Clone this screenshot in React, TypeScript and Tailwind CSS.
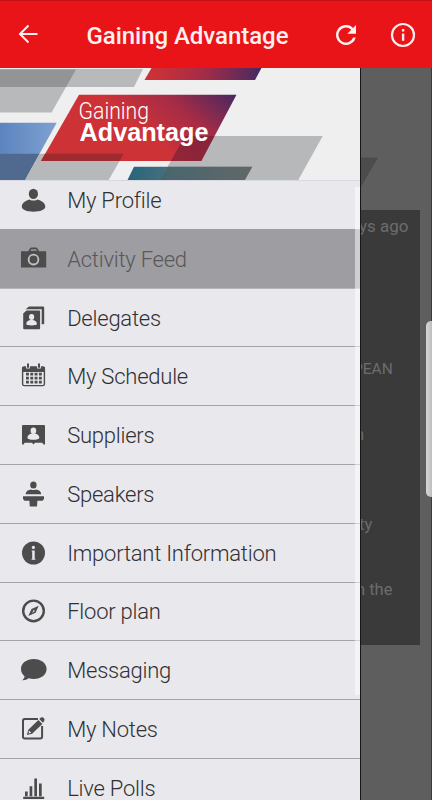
import type { ReactNode } from "react"

const items: { label: string; icon: ReactNode }[] = [
  {
    label: "My Profile",
    icon: (
      <>
        <ellipse cx="13.4" cy="7.9" rx="4.6" ry="5.2" />
        <path d="M9.500 13.400q4 2.400 8 0c4.500 1.300 7.800 3.900 7.800 7.200 0 3.300-5 5.200-11.800 5.200S1.800 23.900 1.800 20.600c0-3.300 3.200-5.900 7.700-7.200z" />
      </>
    ),
  },
  {
    label: "Activity Feed",
    icon: (
      <>
        <path d="M1 6.300h7.200l2-3.200q.4-.7 1.200-.7h4.600q.8 0 1.200.7l2 3.200h7v16.300H1z" />
        <path d="M11.200 4.300h5l.8 1.500h-6.600z" fill="#9c9b9f" />
        <circle cx="13.500" cy="14.600" r="4.900" fill="none" stroke="#c2c1c4" strokeWidth="1.800" />
      </>
    ),
  },
  {
    label: "Delegates",
    icon: (
      <>
        <path d="M5.500 5.200 9 2.500h14q1.200 0 1.200 1.200v15.500q0 1-1 1h-1.500V5.200z" />
        <path d="M6.500 6.400h12.600q1 0 1 1v16.800q0 1-1 1H4.200q-1 0-1-1V9.600z" />
        <ellipse cx="11.600" cy="13" rx="2.600" ry="2.900" fill="#e9e8ed" />
        <path d="M6.300 20.300c0-3 2.500-4.300 5.300-4.300s5.300 1.300 5.300 4.300c0 1.500-10.600 1.500-10.600 0z" fill="#e9e8ed" />
      </>
    ),
  },
  {
    label: "My Schedule",
    icon: (
      <>
        <rect x="2.600" y="5" width="21.800" height="18.600" rx="1.600" fill="none" stroke="#4c4c4d" strokeWidth="1.400" />
        <path d="M2 5h23v5H2z" />
        <path d="M8 2v4.500M19 2v4.500" stroke="#e9e8ed" strokeWidth="3.800" />
        <path d="M8 1.500v4.300M19 1.500v4.300" stroke="#4c4c4d" strokeWidth="2" />
        <path d="M6 12.200h16M6 16.200h16M6 20.200h16" stroke="#4c4c4d" strokeWidth="2.700" strokeDasharray="2.900 1.400" />
      </>
    ),
  },
  {
    label: "Suppliers",
    icon: (
      <>
        <path d="M2 5q0-1 1-1h21q1 0 1 1v18.500h-1.500l-1.200-1.800h-7.300l-1.500 1.800-1.500-1.800H4.700l-1.200 1.800H2z" />
        <ellipse cx="13.400" cy="9.700" rx="2.800" ry="3.200" fill="#e9e8ed" />
        <path d="M7.500 16.800c0-2.800 2.800-4.200 5.900-4.200s5.900 1.400 5.900 4.200c0 2.700-11.800 2.700-11.800 0z" fill="#e9e8ed" />
      </>
    ),
  },
  {
    label: "Speakers",
    icon: (
      <>
        <ellipse cx="13.400" cy="5" rx="3.200" ry="3.600" />
        <path d="M5.700 14.200c0-3 2.800-4.300 5.400-4.700q2.300 1 4.600 0c2.600.4 5.500 1.700 5.500 4.700z" />
        <path d="M3 16.200h21v2.900l-1.500 1.600h-5.100l-.4 5.800h-7.200l-.4-5.800H4.500L3 19.100z" />
      </>
    ),
  },
  {
    label: "Important Information",
    icon: (
      <>
        <circle cx="13.500" cy="14" r="11.500" />
        <circle cx="13.400" cy="8.400" r="1.600" fill="#e9e8ed" />
        <path d="M11.700 11.400h3v8.300h.7v1.100h-3.900v-1.100h.7v-7.200h-.5z" fill="#e9e8ed" />
      </>
    ),
  },
  {
    label: "Floor plan",
    icon: (
      <>
        <circle cx="13.500" cy="13.900" r="10.300" fill="none" stroke="#4c4c4d" strokeWidth="2.400" />
        <path fillRule="evenodd" d="M18.700 8.700 15.600 15.700 8.300 19.100l3.200-7.100zM13.900 12.800l-2 3.100 3-2z" />
      </>
    ),
  },
  {
    label: "Messaging",
    icon: (
      <path d="M13.800 3C6.500 3 1 7.200 1 12.900c0 3 1.300 5.500 3.600 7.300-.3 1.800-1 3-2.600 4 2.700.2 5-.6 6.700-1.900 1.600.4 3.300.6 5.100.6 7.200 0 12.800-4.300 12.800-10S21 3 13.800 3z" />
    ),
  },
  {
    label: "My Notes",
    icon: (
      <>
        <path d="M18 4.100H4.800Q3 4.100 3 5.900v15.800q0 1.700 1.800 1.700h15.400q1.900 0 1.900-1.700V11" fill="none" stroke="#4c4c4d" strokeWidth="2" />
        <path d="m6.800 20 1.500-5.300L18.400 5l3.900 3.900-10.200 9.800zM19.300 4.100l1.600-1.500q1.500-1 2.900.3t.4 3l-1.300 1.900z" />
        <path d="m8.900 15.400 2.400 2.400-2.700.7z" fill="#e9e8ed" />
      </>
    ),
  },
  {
    label: "Live Polls",
    icon: <path d="M3.200 22.700h21v2.200h-21zM5 17.400h2.700v4.800H5zM9.600 12.300h2.700v9.900H9.600zM14.300 4.400H17v17.800h-2.700zM19 9.600h2.700v12.600H19z" />,
  },
]

function Banner() {
  return (
    <svg className="block h-[112px] w-full shrink-0" viewBox="0 0 360 112">
      <defs>
        <linearGradient id="main" x1="0" y1="0.4" x2="1" y2="0">
          <stop offset="0.4" stopColor="#cd3237" />
          <stop offset="0.68" stopColor="#a62c46" />
          <stop offset="1" stopColor="#472760" />
        </linearGradient>
        <linearGradient id="top">
          <stop offset="0.1" stopColor="#cb3138" />
          <stop offset="0.5" stopColor="#a52c47" />
          <stop offset="1" stopColor="#482962" />
        </linearGradient>
        <linearGradient id="blue">
          <stop stopColor="#5c84bf" />
          <stop offset="1" stopColor="#7ea1d0" />
        </linearGradient>
        <linearGradient id="teal">
          <stop stopColor="#28647b" />
          <stop offset="0.35" stopColor="#49717d" />
          <stop offset="1" stopColor="#727476" />
        </linearGradient>
      </defs>
      <rect width="360" height="112" fill="#efefef" />
      <path d="M0 1h143l-9 18H0z" fill="#b7b9ba" />
      <path d="M0 1.500h76L51.500 44.500H0z" fill="#b7b9ba" />
      <path d="M0 1.500h76L66 19H0z" fill="#929495" />
      <path d="M151.500 0h110L255 12H144.500z" fill="url(#top)" />
      <path d="M0 54.700h56.700L25 112H0z" fill="url(#blue)" />
      <path d="M0 85.700h39.500L25 112H0z" fill="#50698f" />
      <path d="M39.500 85.700h84.200L108.700 112H25z" fill="#b6b8b9" />
      <path d="M185 68h137.700l-24.400 44H160z" fill="#b6b8b9" />
      <path d="M134 98.700h118.300l-7.400 13.300H127.500z" fill="url(#teal)" />
      <path d="M168 98.700h84.300l-7.400 13.300H160z" fill="#4d585c" opacity="0.450" />
      <path d="M79 26.700h157.500L201.300 93H41z" fill="url(#main)" />
      <path d="M45 85.700h78.700l-4.200 7.300H41z" fill="#9f2b2f" />
      <path d="M185 68h29.500l-13.200 25h-30.500z" fill="#751f38" opacity="0.650" />
      <text x="78.500" y="50.500" fill="#fff" fontFamily="Roboto, sans-serif" fontWeight="300" fontSize="23.500" textLength="70.500" lengthAdjust="spacingAndGlyphs">
        Gaining
      </text>
      <text x="79.500" y="73" fill="#fff" fontFamily="Liberation Sans, sans-serif" fontWeight="700" fontSize="25.200" textLength="129" lengthAdjust="spacingAndGlyphs">
        Advantage
      </text>
    </svg>
  )
}

export default function App() {
  return (
    <div className="flex h-[800px] w-[432px] flex-col overflow-hidden bg-[#5e5e5e] font-['Roboto',sans-serif]">
      <header className="flex h-[68px] shrink-0 items-center border-t border-[#bd1114] bg-[#e81418] pr-4 pl-[18px] text-white">
        <svg className="mb-0.5 h-5 w-5" viewBox="0 0 20 20" fill="none" stroke="#fff0f0" strokeWidth="2">
          <path d="M19.500 10H2.500M10.500 1.500 2 10l8.500 8.500" />
        </svg>
        <h1 className="ml-[48.500px] flex-1 pt-0.5 text-[24px] leading-8 font-medium tracking-[-0.040px] whitespace-nowrap text-[#fff0f0]">
          Gaining Advantage
        </h1>
        <svg className="mr-[34px] h-5 w-5" viewBox="0 0 20 20" fill="#fff0f0">
          <path d="M17.100 2.900A10 10 0 1 0 19.700 12.500h-2.600A7.500 7.500 0 1 1 15.300 4.700L11.300 8.700H20V0z" />
        </svg>
        <svg className="h-[26px] w-[26px]" viewBox="0 0 26 26" fill="#fff0f0">
          <circle cx="13" cy="13" r="11" fill="none" stroke="#fff0f0" strokeWidth="2.200" />
          <path d="M11.900 7h2.400v2.400h-2.400zM11.900 11.500h2.400v7.300h-2.400z" />
        </svg>
      </header>

      <div className="relative flex min-h-0 flex-1">
        <nav className="relative flex w-[360px] shrink-0 flex-col overflow-hidden bg-[#e9e8ed]">
          <Banner />
          <ul className="min-h-0 flex-1 overflow-hidden border-t border-[#d6d9e1]">
            {items.map(({ label, icon }, i) => (
              <li
                key={label}
                className={`flex h-[58.790px] items-center border-b pl-5 ${i === 0 ? "-mt-[9.900px]" : ""} ${
                  i === 1 ? "border-[#b5b4b8] bg-[#9e9da1] text-[#58585b]" : i === 0 ? "border-[#9e9da1] text-[#303033]" : "border-[#a5a4a9] text-[#303033]"
                }`}
              >
                <svg className="h-7 w-7" viewBox="0 0 28 28" fill="#4c4c4d">
                  {icon}
                </svg>
                <span className="ml-[19.200px] pt-0.5 text-[22px] leading-7 font-light tracking-[-0.230px] whitespace-nowrap">{label}</span>
              </li>
            ))}
          </ul>
          <div className="absolute top-[119px] right-0 h-[508px] w-[5px] bg-white/50" />
        </nav>

        <main className="flex min-w-0 flex-1 flex-col overflow-hidden border-r border-l border-r-[#3b3b3e] border-l-[#171719] text-[16.500px] leading-5 text-[#6c6c6c]">
          <svg className="h-[142px] w-full shrink-0" viewBox="0 0 70 142">
            <path d="M0 89.500h17L0 119z" fill="#4c4c4c" />
          </svg>
          <section className="mr-[11px] flex h-[435px] shrink-0 flex-col overflow-hidden bg-[#3a3a3a] whitespace-nowrap">
            <p className="mt-1.5 -ml-0.5 text-[17px]">ys ago</p>
            <p className="mt-[123px] -ml-[8px] text-[15.500px]">PEAN</p>
            <p className="mt-[46px] -ml-[6px]">n</p>
            <p className="mt-[70px] -ml-[2px]">ty</p>
            <p className="mt-[45px] -ml-[5px]">n the</p>
          </section>
        </main>
        <div className="absolute top-[253px] right-0 h-[176px] w-[6px] rounded-l-[5px] bg-linear-to-r from-[#d8d8d8] to-[#bdbdbd]" />
      </div>
    </div>
  )
}
